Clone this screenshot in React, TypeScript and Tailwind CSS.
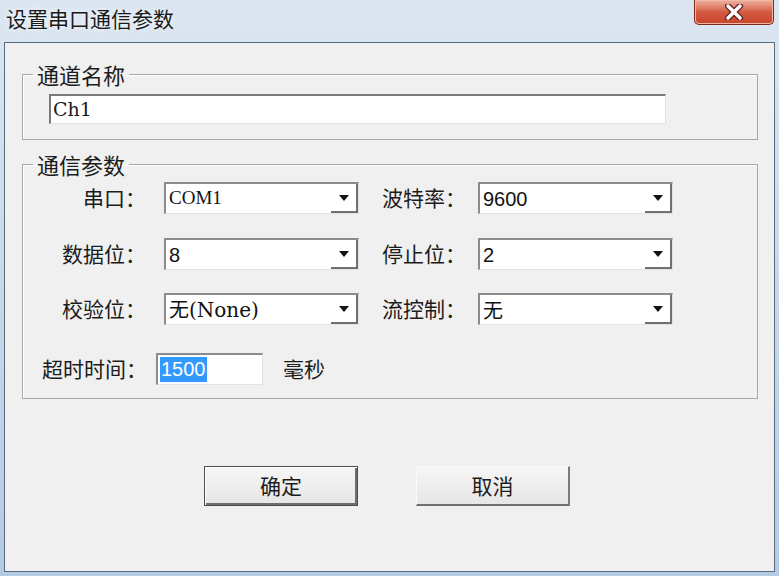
import React from 'react';

const cjk = '"Noto Sans CJK SC", "Noto Sans", sans-serif';

function Combo({ value, font, size = 'text-[20px]', className = '' }: { value: string; font: string; size?: string; className?: string }) {
  return (
    <div
      className={`flex h-[32px] w-[195px] border-t-2 border-l-2 border-t-[#8c8c8c] border-l-[#8c8c8c] border-r border-b border-r-[#e2e2e2] border-b-[#e2e2e2] bg-white ${className}`}
    >
      <div className={`flex flex-1 items-center pl-[3px] text-[#111] ${size}`} style={{ fontFamily: font }}>
        {value}
      </div>
      <div className="flex w-[27px] items-center justify-center border-r-2 border-b-2 border-r-[#707070] border-b-[#707070] bg-white">
        <svg width="10" height="6" viewBox="0 0 10 6">
          <path d="M0 0 H10 L5 6 Z" fill="#111" />
        </svg>
      </div>
    </div>
  );
}

type RowProps = {
  l1: string;
  v1: string;
  f1: string;
  s1?: string;
  l2: string;
  v2: string;
  f2: string;
  s2?: string;
  className?: string;
};

function Row({ l1, v1, f1, s1, l2, v2, f2, s2, className = '' }: RowProps) {
  return (
    <div className={`flex h-[32px] items-center ${className}`}>
      <div className="w-[123px] text-right">{l1}</div>
      <Combo className="ml-[18px]" value={v1} font={f1} size={s1} />
      <div className="w-[107px] text-right">{l2}</div>
      <Combo className="ml-[12px]" value={v2} font={f2} size={s2} />
    </div>
  );
}

function Button({ label, primary }: { label: string; primary?: boolean }) {
  return (
    <div
      className={`flex h-[40px] w-[154px] items-center justify-center bg-gradient-to-b from-[#f6f6f6] to-[#e6e6e6] text-[21px] ${
        primary
          ? 'border border-[#4e4e4e] shadow-[inset_1px_1px_0_#fff,inset_-2px_-2px_0_#6e6e6e]'
          : 'border-t border-l border-t-[#fafafa] border-l-[#fafafa] border-r-2 border-b-2 border-r-[#7a7a7a] border-b-[#6e6e6e]'
      }`}
    >
      {label}
    </div>
  );
}

export default function App() {
  const serif = '"Liberation Serif", serif';
  const sans = '"Liberation Sans", sans-serif';
  const dserif = '"DejaVu Serif", "Noto Sans CJK SC", serif';

  return (
    <div
      className="flex h-[576px] w-[779px] flex-col bg-gradient-to-b from-[#dbe6f1] via-[#c8d8ea] to-[#b3cbe4] text-[#1c1c1c]"
      style={{ fontFamily: cjk }}
    >
      {/* title bar */}
      <div className="flex h-[42px] items-start justify-between">
        <div className="pl-[6px] pt-[6px] text-[21px] leading-[24px] text-[#1a1a1a] [text-shadow:0_0_6px_#fff]">
          设置串口通信参数
        </div>
        <div className="mr-[5px] flex h-[25px] w-[80px] items-center justify-center rounded-b-[5px] border border-t-0 border-[#7a2b1e] bg-gradient-to-b from-[#ecb2a3] via-[#d45a40] to-[#c7452b] shadow-[inset_0_0_0_1px_#f2b7a6]">
          <svg width="20" height="16" viewBox="0 0 20 16">
            <path d="M4 2 L16 14 M16 2 L4 14" stroke="#5a2018" strokeWidth="6" strokeLinecap="round" />
            <path d="M4 2 L16 14 M16 2 L4 14" stroke="#fff" strokeWidth="3.5" strokeLinecap="round" />
          </svg>
        </div>
      </div>

      {/* client area */}
      <div className="mx-[4px] mb-[4px] flex-1 border border-[#5b6b7e] bg-[#f0f0f0]">
        <fieldset className="ml-[17px] mt-[19px] w-[736px] border border-[#a8a8a8] px-0 pb-[15px] shadow-[inset_1px_1px_0_#fff]">
          <legend className="ml-[10px] px-[4px] text-[22px] leading-[24px]">通道名称</legend>
          <div
            className="ml-[26px] mt-[8px] flex h-[30px] w-[617px] items-center border-t-2 border-l-2 border-t-[#7a7a7a] border-l-[#7a7a7a] border-r border-b border-r-[#e0e0e0] border-b-[#e0e0e0] bg-white pl-[2px] text-[19px]"
            style={{ fontFamily: dserif }}
          >
            Ch1
          </div>
        </fieldset>

        <fieldset className="ml-[17px] mt-[12px] w-[736px] border border-[#a8a8a8] px-0 pb-[13px] text-[21px] shadow-[inset_1px_1px_0_#fff]">
          <legend className="ml-[10px] px-[4px] text-[22px] leading-[24px]">通信参数</legend>
          <Row className="mt-[6px]" l1="串口：" v1="COM1" f1={serif} s1="text-[19px]" l2="波特率：" v2="9600" f2={sans} />
          <Row className="mt-[24px]" l1="数据位：" v1="8" f1={sans} l2="停止位：" v2="2" f2={sans} />
          <Row className="mt-[23px]" l1="校验位：" v1="无(None)" f1={dserif} l2="流控制：" v2="无" f2={cjk} />
          <div className="mt-[28px] flex h-[32px] items-center">
            <div className="w-[124px] text-right">超时时间：</div>
            <div className="ml-[9px] flex h-[32px] w-[107px] items-center border-t-2 border-l-2 border-t-[#8c8c8c] border-l-[#8c8c8c] border-r border-b border-r-[#e2e2e2] border-b-[#e2e2e2] bg-white pl-[2px]">
              <span className="bg-[#3399ff] px-[1px] text-[20px] leading-[25px] text-white" style={{ fontFamily: sans }}>
                1500
              </span>
            </div>
            <div className="ml-[20px]">毫秒</div>
          </div>
        </fieldset>

        <div className="ml-[199px] mt-[67px] flex gap-[58px]">
          <Button label="确定" primary />
          <Button label="取消" />
        </div>
      </div>
    </div>
  );
}
